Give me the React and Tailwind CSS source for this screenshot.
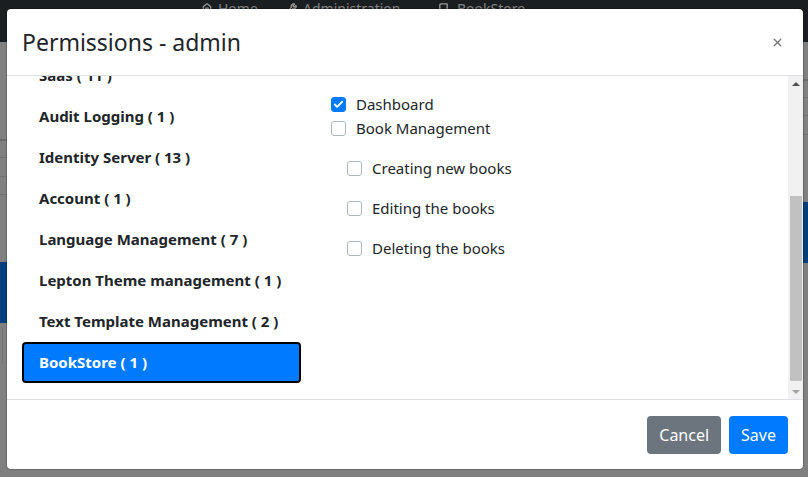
import React, { useEffect, useRef } from "react";
import { X, Check, Home, Wrench, Book } from "lucide-react";

const groups = [
  "Identity Management ( 22 )",
  "Feature Management ( 1 )",
  "Saas ( 11 )",
  "Audit Logging ( 1 )",
  "Identity Server ( 13 )",
  "Account ( 1 )",
  "Language Management ( 7 )",
  "Lepton Theme management ( 1 )",
  "Text Template Management ( 2 )",
  "BookStore ( 1 )",
];

function Box({ checked }) {
  return (
    <span
      className={
        "flex h-[15px] w-[15px] shrink-0 items-center justify-center rounded-[3px] border " +
        (checked ? "border-[#007bff] bg-[#007bff]" : "border-[#adb5bd] bg-white")
      }
    >
      {checked && <Check className="h-[11px] w-[11px] text-white" strokeWidth={4} />}
    </span>
  );
}

function Perm({ label, checked, child }) {
  return (
    <label className={"flex items-center gap-[10px] " + (child ? "h-[40px] pl-[16px]" : "h-[24px]")}>
      <Box checked={checked} />
      <span>{label}</span>
    </label>
  );
}

export default function App() {
  const bodyRef = useRef(null);

  useEffect(() => {
    if (bodyRef.current) bodyRef.current.scrollTop = bodyRef.current.scrollHeight;
  }, []);

  return (
    <div
      className="relative h-[477px] w-[808px] overflow-hidden bg-[#808080] text-[#212529]"
      style={{ fontFamily: '"Noto Sans", "Open Sans", sans-serif' }}
    >
      {/* page behind the backdrop */}
      <div className="flex h-[42px] items-start bg-[#1b1e21] pl-[202px] pt-[1px] text-[14px] leading-[16px] text-[#858585]">
        <span className="flex w-[85px] items-start gap-[6px]">
          <Home className="mt-[2px] h-[10px] w-[10px] text-[#9a9a9a]" strokeWidth={3} />
          <span>Home</span>
        </span>
        <span className="flex w-[151px] items-start gap-[6px]">
          <Wrench className="mt-[2px] h-[10px] w-[10px] text-[#9a9a9a]" strokeWidth={3} />
          <span>Administration</span>
        </span>
        <span className="flex items-start gap-[8px]">
          <Book className="mt-[2px] h-[11px] w-[11px] text-[#9a9a9a]" strokeWidth={3} />
          <span>BookStore</span>
        </span>
      </div>
      <div className="flex">
        <div className="w-1/2">
          <div className="mt-[97px] h-[2px] bg-[#6b6b6b]" />
          <div className="mt-[16px] h-px bg-[#737373]" />
          <div className="mt-[18px] h-px bg-[#737373]" />
          <div className="mt-[17px] h-px bg-[#737373]" />
          <div className="mt-[67px] h-[61px] bg-[#053e7c]" />
          <div className="mt-[5px] h-[36px] w-[3px] border-r border-[#737373]" />
        </div>
        <div className="w-1/2">
          <div className="mt-[37px] h-[2px] bg-[#6b6b6b]" />
          <div className="mt-[16px] h-px bg-[#737373]" />
          <div className="mt-[17px] h-px bg-[#737373]" />
          <div className="mt-[18px] h-px bg-[#737373]" />
          <div className="mt-[67px] h-[61px] bg-[#053e7c]" />
        </div>
      </div>

      {/* modal */}
      <div className="absolute left-[6px] top-[8px] flex h-[462px] w-[798px] flex-col overflow-hidden rounded-[5px] border border-black/20 bg-white bg-clip-padding">
        <div className="flex h-[67px] shrink-0 items-center justify-between border-b border-[#dee2e6] pl-[15px] pr-[19px]">
          <h5 className="text-[23px] leading-[29px]">Permissions - admin</h5>
          <X className="h-[13px] w-[13px] text-[#7a7a7a]" strokeWidth={2.5} />
        </div>

        <div className="flex min-h-0 flex-1">
          <div ref={bodyRef} className="min-w-0 flex-1 overflow-hidden px-[15px] pb-[16px] pt-[15px] text-[15px]">
            <Perm label="Grant all permissions" />
            <hr className="my-[19px] border-[#e9ecef]" />
            <div className="flex gap-[30px]">
              <div className="flex w-[279px] shrink-0 flex-col">
                {groups.map((g) => (
                  <div
                    key={g}
                    className={
                      "flex h-[41px] items-center rounded-[4px] font-bold " +
                      (g.startsWith("BookStore")
                        ? "border-2 border-black bg-[#007bff] pl-[15px] text-white"
                        : "pl-[17px] text-[#212529]")
                    }
                  >
                    {g}
                  </div>
                ))}
              </div>
              <div className="flex flex-1 flex-col">
                <h4 className="text-[22px] leading-[29px]">BookStore</h4>
                <hr className="my-[16px] border-[#e9ecef]" />
                <Perm label="Select all" />
                <div className="h-[33px]" />
                <Perm label="Dashboard" checked />
                <Perm label="Book Management" />
                <div className="h-[8px]" />
                <Perm label="Creating new books" child />
                <Perm label="Editing the books" child />
                <Perm label="Deleting the books" child />
              </div>
            </div>
          </div>
          {/* scrollbar */}
          <div className="flex w-[15px] shrink-0 flex-col items-center bg-[#f1f1f1]">
            <div className="flex h-[15px] items-center justify-center">
              <span className="h-0 w-0 border-x-[4px] border-b-[4px] border-x-transparent border-b-[#505050]" />
            </div>
            <div className="h-[105px]" />
            <div className="h-[185px] w-[12px] bg-[#c1c1c1]" />
            <div className="flex-1" />
            <div className="flex h-[15px] items-center justify-center">
              <span className="h-0 w-0 border-x-[4px] border-t-[4px] border-x-transparent border-t-[#a3a3a3]" />
            </div>
          </div>
        </div>

        <div className="flex h-[70px] shrink-0 items-center justify-end gap-[8px] border-t border-[#dee2e6] pr-[15px] text-[16px]">
          <button className="h-[38px] rounded-[4px] bg-[#6c757d] px-[12px] text-white">Cancel</button>
          <button className="h-[38px] rounded-[4px] bg-[#007bff] px-[12px] text-white">Save</button>
        </div>
      </div>
    </div>
  );
}
